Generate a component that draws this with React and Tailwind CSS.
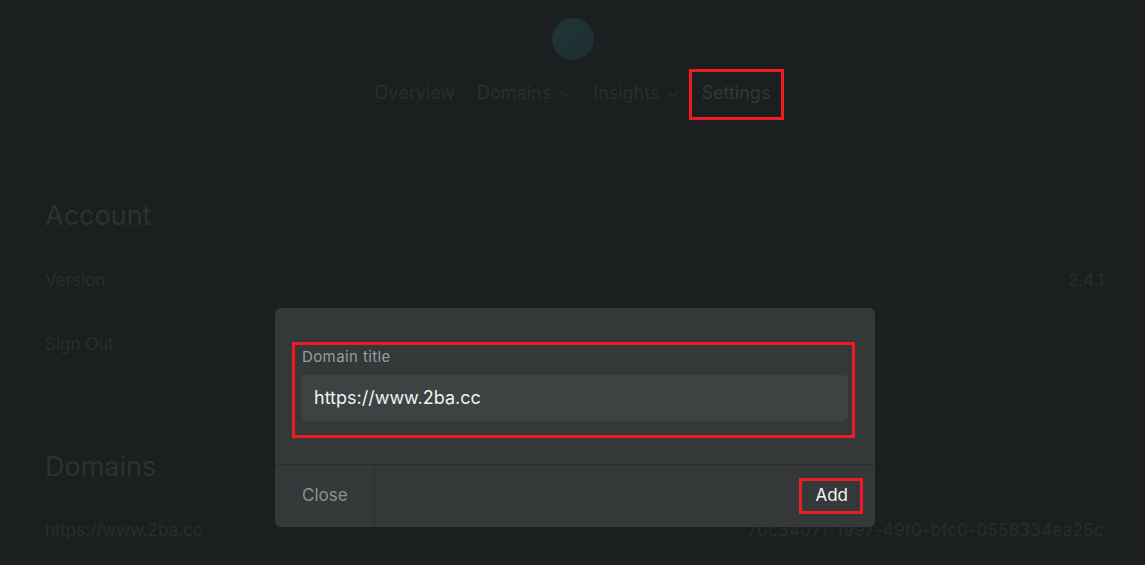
import React from "react";

function Chevron() {
  return (
    <svg width="12" height="12" viewBox="0 0 12 12" fill="none" className="ml-2 mt-[3px]">
      <path d="M2 4.5 L6 8.5 L10 4.5" stroke="currentColor" strokeWidth="1.4" strokeLinecap="round" strokeLinejoin="round" />
    </svg>
  );
}

export default function App() {
  return (
    <div
      className="relative w-full h-[565px] overflow-hidden bg-[#1c1f20]"
      style={{ fontFamily: "Inter, 'Noto Sans', sans-serif" }}
    >
      {/* Header */}
      <div className="flex flex-col items-center pt-[18px]">
        <div className="w-[42px] h-[42px] rounded-full bg-gradient-to-br from-[#1f3634] to-[#1f2d33]" />
        <nav className="flex items-center gap-[22px] mt-[19px] text-[18px] text-[#2b2e2f]">
          <span>Overview</span>
          <span className="flex items-center">Domains<Chevron /></span>
          <span className="flex items-center">Insights<Chevron /></span>
          <span className="relative text-[#33373a]">
            Settings
            <span className="absolute -left-[12px] -top-[10px] w-[95px] h-[51px] border-[3px] border-[#ed1c24]" />
          </span>
        </nav>
      </div>

      {/* Content */}
      <div className="pl-[45px] pr-[41px] mt-[93px]">
        <h2 className="text-[27px] leading-[34px] text-[#2e3132]">Account</h2>
        <div className="flex justify-between mt-[35px] text-[17px] leading-[24px] text-[#2a2d2e]">
          <span>Version</span>
          <span>2.4.1</span>
        </div>
        <div className="flex justify-between mt-[40px] text-[17px] leading-[24px] text-[#2a2d2e]">
          <span>Sign Out</span>
        </div>
        <h2 className="text-[27px] leading-[34px] text-[#2e3132] mt-[94px]">Domains</h2>
        <div className="flex justify-between mt-[34px] text-[17px] leading-[24px] text-[#2a2d2e]">
          <span>https://www.2ba.cc</span>
          <span className="tracking-[0.3px]">70c34071-1997-49f0-bfc0-0558334ea25c</span>
        </div>
      </div>

      {/* Modal */}
      <div className="absolute left-[275px] top-[308px] w-[600px] rounded-[6px] bg-[#343839] flex flex-col">
        <div className="relative px-[27px] pt-[40px] pb-[43px]">
          <label className="block text-[15px] leading-[18px] tracking-[0.4px] text-[#9a9d9e]">Domain title</label>
          <div className="mt-[9px] h-[46px] rounded-[5px] bg-[#3d4243] flex items-center px-[12px] pb-[2px] text-[18px] text-[#f2f2f2]">
            https://www.2ba.cc
          </div>
          <span className="absolute left-[17px] top-[34px] w-[563px] h-[96px] border-[3px] border-[#ed1c24]" />
        </div>
        <div className="flex border-t border-[#2a2e2f] h-[63px]">
          <div className="w-[100px] border-r border-[#2a2e2f] flex items-center pl-[27px] text-[17px] text-[#8e9293]">
            Close
          </div>
          <div className="flex-1 flex items-center justify-end pr-[27px]">
            <span className="relative text-[17px] text-[#f5f5f5]">
              Add
              <span className="absolute -left-[16px] -top-[5px] w-[64px] h-[36px] border-[3px] border-[#ed1c24]" />
            </span>
          </div>
        </div>
      </div>
    </div>
  );
}
